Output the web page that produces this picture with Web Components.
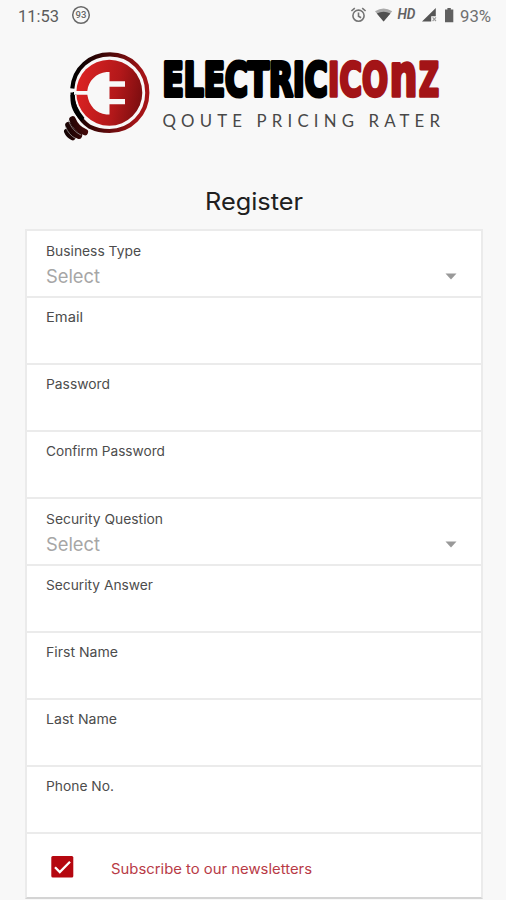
<!DOCTYPE html>
<html lang="en">
<head>
<meta charset="utf-8">
<title>Register</title>
<style>
html,body{margin:0;background:#f8f8f8}
body{width:506px;height:900px;overflow:hidden;font-family:"Open Sans","Noto Sans",sans-serif}
</style>
</head>
<body>
<register-screen></register-screen>
<script>
const define=(name,render)=>customElements.define(name,class extends HTMLElement{
  connectedCallback(){
    if(this.shadowRoot)return;
    this.attachShadow({mode:'open'}).innerHTML=render(this);
  }
});

/* One line of text set to an exact width */
define('fit-text',el=>{
  const w=+el.getAttribute('width'),s=+el.getAttribute('size');
  return `<style>:host{display:block;height:${s}px;width:${w}px}svg{display:block;overflow:visible}text{font-size:${s}px;fill:currentColor}</style>
  <svg width="${w}" height="${s}"><text x="0" y="${s}" textLength="${w}" lengthAdjust="spacingAndGlyphs">${el.getAttribute('text')}</text></svg>`;
});

define('status-bar',()=>`
<style>
:host{display:flex;height:32px;box-sizing:border-box;padding:0 15px 0 18px;justify-content:space-between;color:#707070;font-family:Roboto,sans-serif}
div{display:flex}
svg{display:block}
fit-text{margin-top:5px}
.time{color:#5c5c5c}
</style>
<div><fit-text class="time" text="11:53" width="41" size="17"></fit-text>
<svg width="20" height="20" viewBox="0 0 20 20" style="margin:5px 0 0 12px"><circle cx="10" cy="10" r="8.3" fill="none" stroke="#686868" stroke-width="1.5"/><text x="10" y="13.4" text-anchor="middle" font-size="9.5" font-weight="500" fill="#666">93</text></svg></div>
<div>
<svg width="110" height="32" viewBox="350 0 110 32">
<g fill="none" stroke="#747474" stroke-width="1.6"><circle cx="358.5" cy="15.7" r="5.6"/><path d="M358.5 12.5v3.7l2.6 1.6M351.4 11l3.4-2.9M365.6 11l-3.4-2.9"/></g>
<path d="M375 11.2q8.6-5.6 17.2 0L383.6 21.4z" fill="#aaa"/><path d="M376.8 13.4q6.8-3.4 13.6 0L383.6 21.4z" fill="#505050"/>
<text x="397.5" y="19.4" font-size="14" font-weight="600" font-style="italic" fill="#626262" textLength="18" lengthAdjust="spacingAndGlyphs">HD</text>
<path d="M422 21.5L435.8 8v8.2h-4.6v5.3z" fill="#555"/><path d="M432.6 17.4l3.4 3.6m0-3.6l-3.4 3.6" stroke="#999" stroke-width="1.1"/>
<path d="M445 9.5h2.4V8h3.4v1.5h2.5v12.7H445z" fill="#606060"/>
</svg>
<fit-text text="93%" width="31" size="16.5"></fit-text></div>`);

define('brand-logo',()=>`
<style>:host{display:block;height:95px;padding-left:60px}svg{display:block;overflow:visible}
.word{font-family:"DejaVu Sans",sans-serif;font-weight:bold;font-size:45.5px;stroke-width:4.2;stroke-linejoin:round}
.red{fill:#a31417;stroke:#a31417;stroke-width:3.6}
.tag{font-family:Lato,sans-serif;font-size:16.8px;fill:#484848}</style>
<svg width="390" height="95" viewBox="60 48 390 95">
<defs>
<linearGradient id="ring" x1="62" y1="80" x2="149" y2="92" gradientUnits="userSpaceOnUse"><stop offset=".12" stop-color="#000"/><stop offset=".5" stop-color="#4b0808"/><stop offset=".9" stop-color="#a41417"/></linearGradient>
<linearGradient id="disk" x1="80" y1="80" x2="142" y2="92" gradientUnits="userSpaceOnUse"><stop stop-color="#d92222"/><stop offset=".6" stop-color="#b3181a"/><stop offset="1" stop-color="#7f0e10"/></linearGradient>
<linearGradient id="base" x1="64" y1="132" x2="86" y2="128" gradientUnits="userSpaceOnUse"><stop stop-color="#100303"/><stop offset="1" stop-color="#440909"/></linearGradient>
</defs>
<path d="M72.3 88.5C74 68 90 54.4 110 54.4c21 0 37.3 16.6 37.3 38.3s-17 38.3-37.8 38.3c-8 0-14.5-1.7-20-4.4C80 120 73.5 110 72.6 94.8" fill="none" stroke="url(#ring)" stroke-width="4.2"/>
<path d="M70.5 92H77v3h-2.5q0 11 10 23l-3 3c-8-7-11.5-15-11-24z" fill="#000"/>
<circle cx="109.3" cy="92.7" r="33" fill="url(#disk)"/>
<path d="M109.5 72v9.3H125v5.4h-15.5v12.2H125v5.3h-15.5V114.5h-3c-10.5-1.2-17.5-8.6-19.2-19.8H74v-3.7h13.3C88.4 81 96 73 106.5 72z" fill="#f8f8f8"/>
<path d="M66.3 87.7l6.5 3.2v1.5h-3l-3.5-2z" fill="#f8f8f8"/>
<g fill="none" stroke="url(#base)" stroke-width="6.6" stroke-linecap="round"><path d="M72.5 119.5c2.6 6.5 6.8 10.5 12.3 12.5"/><path d="M68.5 125.2c2 5.4 5.6 8.6 10.4 10.4"/><path d="M67 131.5c1.2 3 3 4.6 5.6 5.8" stroke-width="6"/></g>
<g fill="none" stroke="#999" stroke-width=".8"><path d="M68.4 120.5c2.5 6.8 6.8 11.8 12.8 14.6M65.6 126.8c2 5.3 5.6 9.5 10 11.6"/></g>
<text class="word" x="162.5" y="96.2" textLength="165" lengthAdjust="spacingAndGlyphs" fill="#000" stroke="#000">ELECTRIC</text>
<text class="word red" x="328" y="96.2" textLength="60" lengthAdjust="spacingAndGlyphs">ICO</text>
<text class="word red" x="389.5" y="96.2" textLength="28" lengthAdjust="spacingAndGlyphs" style="font-size:58px">n</text>
<text class="word red" x="419" y="96.2" textLength="20" lengthAdjust="spacingAndGlyphs">Z</text>
<text class="tag" x="162.5" y="126.8" textLength="277.5" lengthAdjust="spacing">QOUTE PRICING RATER</text>
</svg>`);

define('form-field',el=>`
<style>
:host{display:block;height:67px;box-sizing:border-box;padding:0 24px 0 19px;border-bottom:2px solid #ebebeb;color:#4c4c4c}
.box{display:flow-root}
.label{margin-top:${el.getAttribute('top')}px}
.value{display:flex;justify-content:space-between;margin-top:8px;color:#a6a6a6}
svg{margin-top:9px}
</style>
<div class="box"><fit-text class="label" text="${el.getAttribute('label')}" width="${el.getAttribute('text-width')}" size="13"></fit-text>
${el.hasAttribute('select')?'<div class="value"><fit-text text="Select" width="54" size="18.5"></fit-text><svg width="12" height="7"><path d="M.5.5h11L6 6.5z" fill="#999"/></svg></div>':''}</div>`);

define('check-row',()=>`
<style>:host{display:flex;height:65px;box-sizing:border-box;padding:22px 0 0 24px;color:#b83a46}svg{flex:none}fit-text{margin:4px 0 0 36.5px}</style>
<svg width="23" height="22"><rect x=".3" width="22" height="21.5" rx="1.5" fill="#b50710"/><path d="M4 11.2l4.8 4.8L19 5.8" fill="none" stroke="#fff" stroke-width="2.3"/></svg>
<fit-text text="Subscribe to our newsletters" width="201" size="14"></fit-text>`);

define('form-card',()=>`
<style>:host{display:block;width:458px;height:670px;box-sizing:border-box;margin:0 auto 0 25px;background:#fff;border:2px solid #ebebeb;border-bottom-color:#d4d4d4}</style><slot></slot>`);

const fields=[['Business Type',95,12,1],['Email',37,11],['Password',64,11],['Confirm Password',119,11],['Security Question',117,12,1],['Security Answer',107,11],['First Name',72,11],['Last Name',71,11],['Phone No.',68,11]];
define('register-screen',()=>`
<style>
:host{display:flex;flex-direction:column;height:900px;background:#f8f8f8}
brand-logo{margin-top:16px}
.title{margin:43px 0 0 205px;color:#202020;font-family:Inter,"Open Sans",sans-serif}
form-card{margin-top:19px;font-family:Inter,"Open Sans",sans-serif}
</style>
<status-bar></status-bar><brand-logo></brand-logo>
<fit-text class="title" text="Register" width="98" size="24"></fit-text>
<form-card>${fields.map(([l,w,t,s])=>`<form-field label="${l}" text-width="${w}" top="${t}" ${s?'select':''}></form-field>`).join('')}<check-row></check-row></form-card>`);
</script>
</body>
</html>
